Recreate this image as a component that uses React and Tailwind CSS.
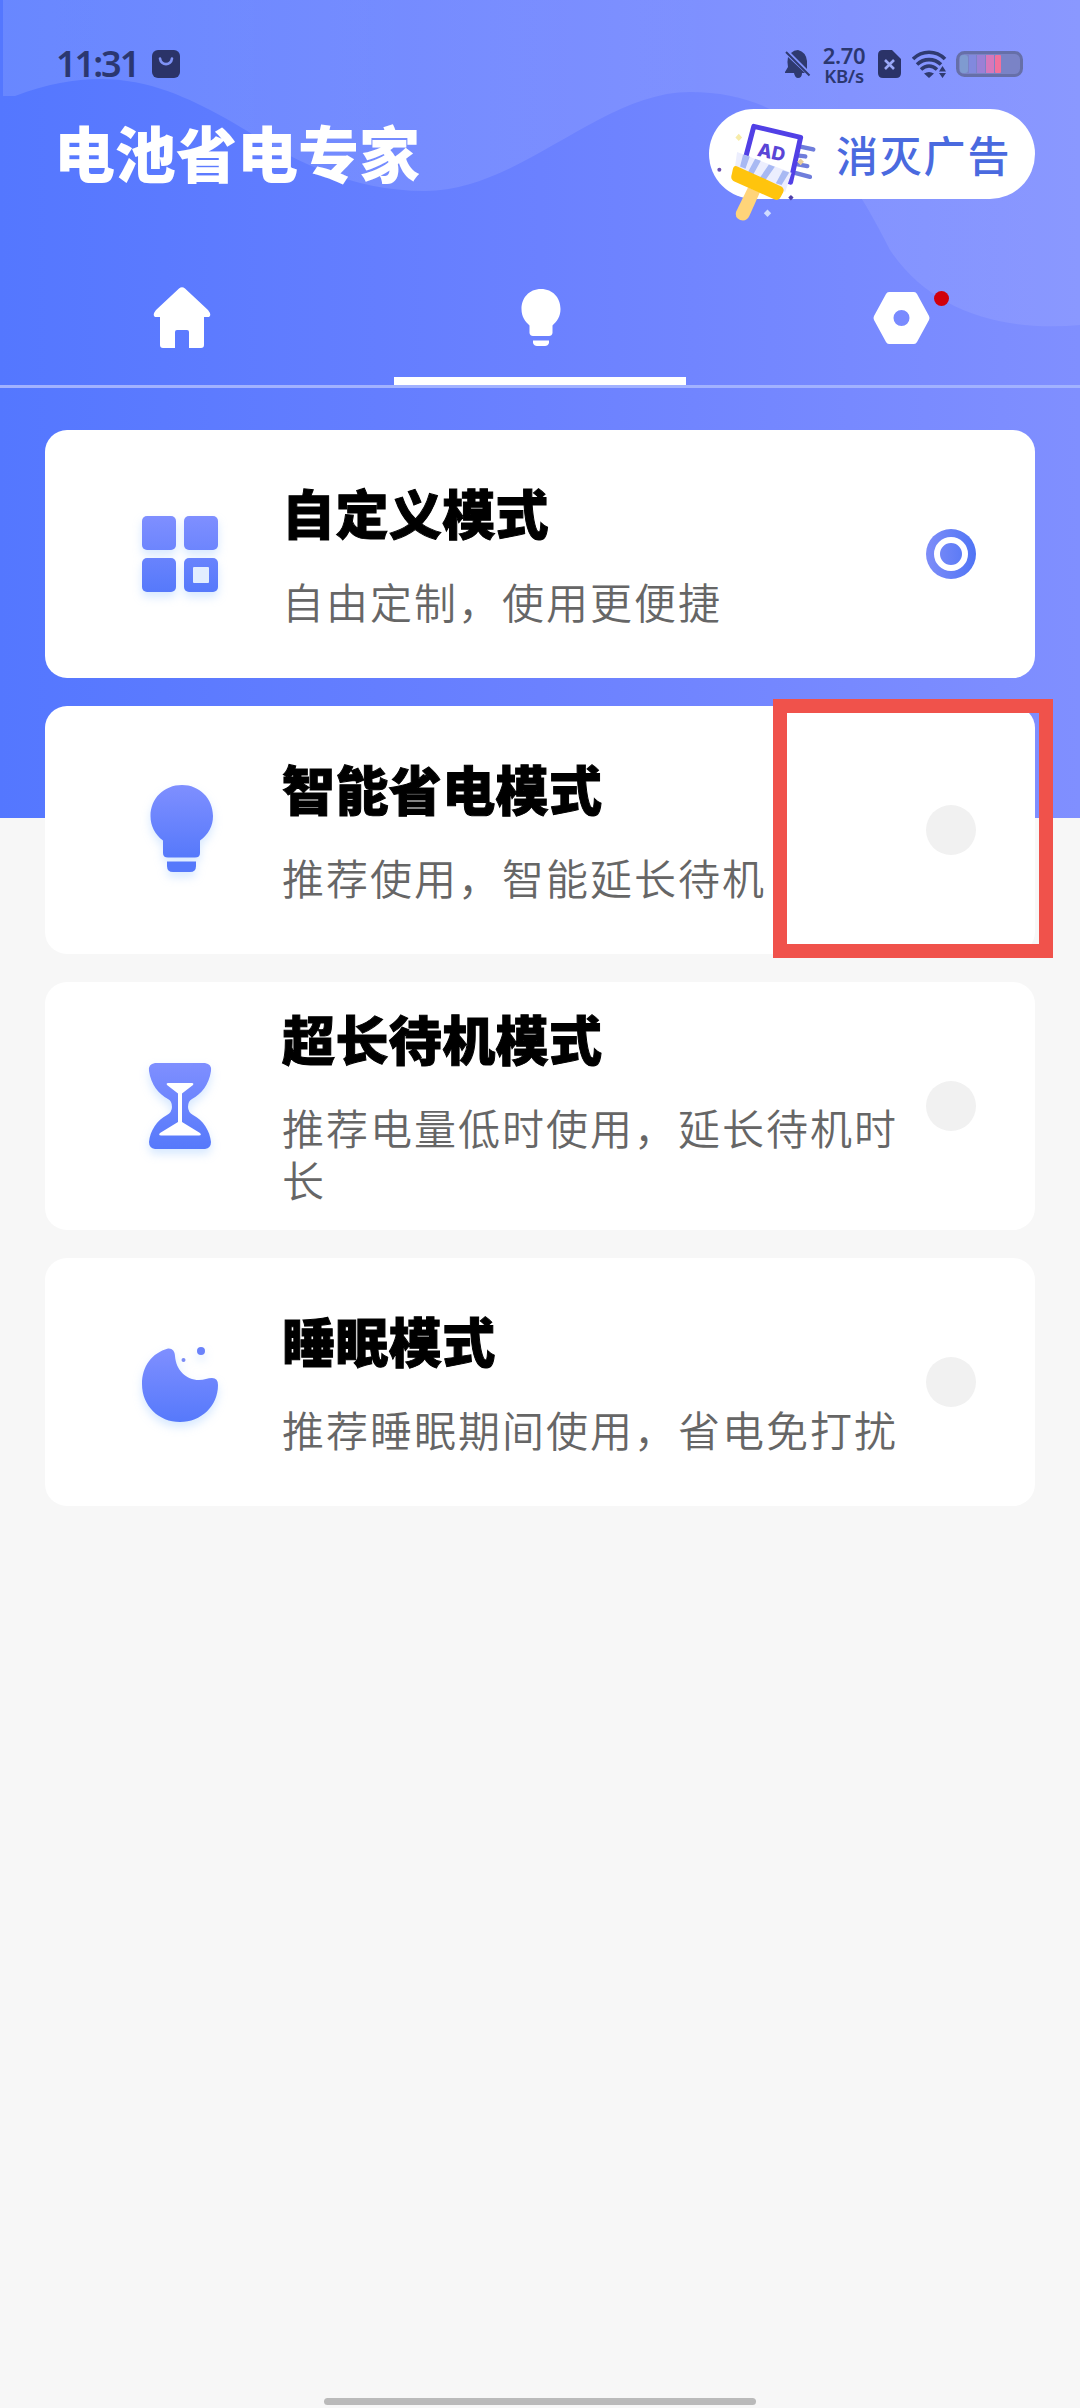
const MODES = [
  { id: 'custom', title: '自定义模式', desc: '自由定制，使用更便捷', icon: GridIcon },
  { id: 'smart', title: '智能省电模式', desc: '推荐使用，智能延长待机', icon: BulbIcon },
  { id: 'standby', title: '超长待机模式', desc: '推荐电量低时使用，延长待机时长', icon: HourglassIcon },
  { id: 'sleep', title: '睡眠模式', desc: '推荐睡眠期间使用，省电免打扰', icon: MoonIcon },
]

function IconGradient({ id }) {
  return (
    <defs>
      <linearGradient id={id} x1="0" y1="0" x2="0" y2="1">
        <stop offset="0" stopColor="#7f8fff" />
        <stop offset="1" stopColor="#5679fb" />
      </linearGradient>
    </defs>
  )
}

const ICON_CLASS = 'w-[100px] h-[110px] overflow-visible drop-shadow-[0_5px_5px_rgba(120,180,255,0.3)]'

// All mode icons share a 100x110 box centred on the card
function GridIcon() {
  return (
    <svg viewBox="0 0 100 110" className={ICON_CLASS}>
      <defs>
        <linearGradient id="grid" gradientUnits="userSpaceOnUse" x1="0" y1="17" x2="0" y2="93">
          <stop offset="0" stopColor="#7f8fff" />
          <stop offset="1" stopColor="#5679fb" />
        </linearGradient>
      </defs>
      <g fill="url(#grid)">
        <rect x="12" y="17" width="34" height="34" rx="5" />
        <rect x="54" y="17" width="34" height="34" rx="5" />
        <rect x="12" y="59" width="34" height="34" rx="5" />
        <rect x="54" y="59" width="34" height="34" rx="5" />
      </g>
      <rect x="63" y="68" width="16" height="16" rx="1" fill="#e2edff" />
    </svg>
  )
}

function BulbIcon() {
  return (
    <svg viewBox="0 0 100 110" className={ICON_CLASS}>
      <IconGradient id="bulb" />
      <path
        d="M52 10C34 10 20.500 23.500 20.500 41C20.500 51 25 59.500 33 65.500V78Q33 82.500 38 82.500H65Q70 82.500 70 78V65.500C78.500 59.500 83 51 83 41C83 23.500 69.500 10 52 10Z"
        fill="url(#bulb)"
      />
      <path d="M37 86.500H66V91Q66 97 60 97H43Q37 97 37 91Z" fill="#5679fb" />
    </svg>
  )
}

function HourglassIcon() {
  return (
    <svg viewBox="0 0 100 110" className={ICON_CLASS}>
      <IconGradient id="hourglass" />
      <path
        d="M25 12H75Q82 13 81 20C79 34 71 43 62 48Q58 50 58 56Q58 61 63 64C73 69 80 80 81 91Q81 97 75 98H25Q19 97 19 91C20 80 27 69 37 64Q42 61 42 56Q42 50 38 48C29 43 21 34 19 20Q18 13 25 12Z"
        fill="url(#hourglass)"
      />
      <path
        d="M38 32H62Q64 32 63 34L52 42.500V71L70 82Q72 84.500 69 84.500H31Q28 84.500 30 82L48 71V42.500L37 34Q36 32 38 32Z"
        fill="#fff"
      />
    </svg>
  )
}

function MoonIcon() {
  return (
    <svg viewBox="0 0 100 110" className={ICON_CLASS}>
      <IconGradient id="moon" />
      <path
        d="M38 21.500C42 21 45 24 45 29C46 43 56 53 69 53C74 53 78 51 82 51Q88 51 88 58C88 79 71 95 50 95C29 95 12 79 12 57C12 39 22 26 38 21.500Z"
        fill="url(#moon)"
      />
      <circle cx="71" cy="24" r="4" fill="#6a82fb" />
      <circle cx="53.500" cy="33" r="2" fill="#7b8cf5" />
    </svg>
  )
}

function HeaderBackground() {
  return (
    <svg viewBox="0 0 1080 818" className="absolute inset-x-0 top-0 h-[818px] w-full">
      <defs>
        <linearGradient id="base" x1="0" y1="0" x2="1" y2="0">
          <stop offset="0" stopColor="#5477ff" />
          <stop offset="0.5" stopColor="#6b81ff" />
          <stop offset="1" stopColor="#808fff" />
        </linearGradient>
        <linearGradient id="wave" x1="0" y1="0" x2="1" y2="0">
          <stop offset="0" stopColor="#fff" stopOpacity="0.12" />
          <stop offset="1" stopColor="#fff" stopOpacity="0.08" />
        </linearGradient>
      </defs>
      <rect width="1080" height="818" fill="url(#base)" />
      <path
        d="M3 0H1080V325C1000 332 930 310 890 250C850 170 800 92 690 92C600 92 520 191 425 191C330 191 265 140 225 118C170 88 110 60 15 96H3Z"
        fill="url(#wave)"
      />
    </svg>
  )
}

function StatusBar() {
  return (
    <div className="flex h-[109px] items-start pt-[48px] pl-[56px] pr-[57px] text-[#2b3770]">
      <span className="-mt-[6px] h-[44px] w-[96px] whitespace-nowrap font-['Noto_Sans'] text-[36px] leading-[44px] font-semibold tracking-[-2px]">11:31</span>
      <svg viewBox="0 0 28 28" className="mt-[2px] h-[28px] w-[28px]">
        <rect width="28" height="28" rx="6" fill="#2b3368" />
        <path d="M8 8.500C9 16 19 16 20 8.500" fill="none" stroke="#7f92f5" strokeWidth="2.600" strokeLinecap="round" />
      </svg>
      <div className="flex-1" />
      <svg viewBox="0 0 26 28" className="mt-[2px] h-[28px] w-[26px]">
        <path d="M13 0Q9 0 6 3L22 19V11Q21 2 13 0ZM3 7Q2 11 3 17L0 22V23H9Q10 28 13 28Q17 28 17 23H20Z" fill="#2f3a70" />
        <path d="M1 2L24.500 25.500" stroke="#2f3a70" strokeWidth="2" />
      </svg>
      <div className="ml-[10px] flex w-[46px] flex-col items-center font-['Noto_Sans'] font-semibold">
        <span className="-mt-[4px] h-[22px] text-[22px] leading-[22px] tracking-[-0.3px]">2.70</span>
        <span className="text-[18.5px] leading-[19px] tracking-[-0.3px]">KB/s</span>
      </div>
      <svg viewBox="0 0 23 28" className="mt-[2px] ml-[11px] h-[28px] w-[23px]">
        <path d="M5 0H14L23 9V23Q23 28 18 28H5Q0 28 0 23V5Q0 0 5 0Z" fill="#2b3368" />
        <path d="M7 10L16 19M16 10L7 19" stroke="#9aa8f8" strokeWidth="2.600" />
      </svg>
      <svg viewBox="0 0 36 28" className="mt-[2px] ml-[11px] h-[28px] w-[36px]">
        <g fill="none" stroke="#2f3a70" strokeWidth="3.600">
          <path d="M1 9C10 0 24 0 33 9" />
          <path d="M5 14.500C12 8 22 8 29 14.500" />
          <path d="M9 19.500C14 15 20 15 25 19.500" />
        </g>
        <path d="M12 23.500Q17 20.500 22 23.500L17 28Z" fill="#2f3a70" />
        <path d="M27 21.500L30.500 16L34 21.500ZM27 23L30.500 28L34 23Z" fill="#2f3a70" />
      </svg>
      <svg viewBox="0 0 67 26" className="mt-[3px] ml-[8px] h-[26px] w-[67px]">
        <rect x="1.500" y="1.500" width="64" height="23" rx="7" fill="#7a83c6" stroke="#666fa8" strokeWidth="3" />
        <rect x="4" y="4" width="8" height="18" rx="3" fill="#7f9bd0" />
        <rect x="13" y="4" width="7" height="18" fill="#8189de" />
        <rect x="21" y="4" width="8" height="18" fill="#9b80d6" />
        <rect x="30" y="4" width="8" height="18" fill="#d678bb" />
        <rect x="39" y="4" width="6" height="18" rx="1" fill="#f2719c" />
      </svg>
    </div>
  )
}

// Paint brush wiping away an ad banner
function BrushIcon() {
  return (
    <svg viewBox="100 350 320 320" className="absolute top-[8px] left-[4px] h-[107px] w-[107px]">
      <path d="M350 436L400 447M350 465L376 468M350 491L382 497M345 517L390 529" stroke="#6f7ddb" strokeWidth="13" strokeLinecap="round" />
      <path d="M222 378L362 411L332 545L190 500Z" fill="#fff" stroke="#5140e6" strokeWidth="15" strokeLinejoin="round" />
      <text x="230" y="466" transform="rotate(12 230 466)" fontFamily="Inter" fontWeight="800" fontSize="56" fill="#5a45d6">AD</text>
      <path d="M172 455L335 517L316 574L165 505Z" fill="#eceefe" />
      <path d="M190 462L210 468L197 505L181 498ZM226 475L243 481L220 523L204 516ZM267 492L285 499L256 540L240 532ZM309 509L328 516L305 553L288 548Z" fill="#a8b9f3" />
      <path d="M205 560L240 576L209 645Q200 664 181 658Q164 650 169 633Z" fill="#ffd479" />
      <path d="M171 497L301 556Q315 562 310 575L302 590Q296 602 283 596L164 543Q151 537 156 522L159 508Q161 494 171 497Z" fill="#ffc40d" />
      <circle cx="119" cy="508" r="6" fill="#6b50b0" />
      <path d="M333 583L341 591L333 600L325 591Z" fill="#4f3fa8" />
      <path d="M177 400L187 411L177 422L167 411Z" fill="#f7eca8" />
      <path d="M362 474L372 484L362 494L352 484Z" fill="#e8cd9c" />
      <path d="M263 627L274 638L263 649L252 638Z" fill="#cfdcff" />
    </svg>
  )
}

function Header() {
  return (
    <div className="flex h-[90px] items-center justify-between pr-[45px] pl-[54px]">
      <h1 className="-mt-[4px] text-[61px] leading-[90px] font-black text-white">电池省电专家</h1>
      <button className="relative h-[90px] w-[326px] rounded-full bg-white">
        <BrushIcon />
        <span className="-mt-[1px] block pl-[127px] text-left text-[42px] leading-[90px] font-medium tracking-[1.8px] text-[#4a6adf]">消灭广告</span>
      </button>
    </div>
  )
}

function Tabs() {
  return (
    <div className="grid h-[189px] grid-cols-3 border-b-[3px] border-[#a2b2ff]">
      <div className="flex justify-center pt-[87px]">
        <svg viewBox="0 0 58 62" className="ml-[3px] h-[62px] w-[58px]">
          <path d="M26 2.500Q29 0 32 2.500L55 24Q59 29 56 31H51V59Q51 62 48 62H36V46Q36 44 34 44H24Q22 44 22 46V62H10Q7 62 7 59V31H2Q-1 29 3 24Z" fill="#fff" />
        </svg>
      </div>
      <div className="flex flex-col items-center">
        <svg viewBox="0 0 40 58" className="mt-[90px] ml-[2px] h-[58px] w-[40px]">
          <path d="M20 0C8 0 0.500 9 0.500 20C0.500 28 4 32 8.500 36.500V44Q9 47 12 47H28Q31 47 31.500 44V36.500C36 32 39.500 28 39.500 20C39.500 9 32 0 20 0Z" fill="#fff" />
          <path d="M12 51.500H28V54Q27 57 24 57H16Q13 57 12 54Z" fill="#fff" />
        </svg>
        <div className="mt-[30px] h-[8px] w-[292px] bg-white" />
      </div>
      <div className="flex justify-center pt-[93px]">
        <div className="relative h-[52px] w-[57px]">
          <svg viewBox="0 0 57 52" className="ml-[1px] h-[52px] w-[57px]">
            <path
              d="M16 0H41Q43 0 44 2L56 24Q57 26 56 28L44 50Q43 52 41 52H16Q14 52 13 50L1 28Q0 26 1 24L13 2Q14 0 16 0ZM28.500 18A8 8 0 1 0 28.500 34A8 8 0 1 0 28.500 18Z"
              fill="#fff"
              fillRule="evenodd"
            />
          </svg>
          <span className="absolute -top-[1px] left-[62px] h-[15px] w-[15px] rounded-full bg-[#d1000c]" />
        </div>
      </div>
    </div>
  )
}

function Radio({ checked }) {
  if (!checked) return <span className="h-[50px] w-[50px] rounded-full bg-[#f1f1f1]" />
  return (
    <span className="flex h-[50px] w-[50px] items-center justify-center rounded-full bg-linear-to-r from-[#7e8df8] to-[#4f74f5]">
      <span className="h-[34px] w-[34px] rounded-full border-[6px] border-white" />
    </span>
  )
}

function ModeCard({ mode, checked, highlighted }) {
  const Icon = mode.icon
  return (
    <div className="relative flex h-[248px] items-center rounded-[22px] bg-white pr-[59px] pl-[85px]">
      <Icon />
      <div className="ml-[52px] w-[630px]">
        <h2 className="text-[53px] leading-[62px] font-black tracking-[0.4px] text-black [-webkit-text-stroke:1px_black]">{mode.title}</h2>
        <p className="mt-[32px] text-[42px] leading-[52px] font-[350] tracking-[2px] text-[#666]">{mode.desc}</p>
      </div>
      <div className="ml-auto flex">
        <Radio checked={checked} />
      </div>
      {highlighted && (
        <div className="absolute -top-[7px] -right-[18px] h-[259px] w-[280px] border-[14px] border-[#f0524b]" />
      )}
    </div>
  )
}

export default function App() {
  return (
    <div className="relative h-[2408px] w-[1080px] overflow-hidden bg-[#f7f7f7] font-['Noto_Sans_CJK_SC',sans-serif]">
      <HeaderBackground />
      <div className="relative flex h-full flex-col">
        <StatusBar />
        <Header />
        <Tabs />
        <main className="flex flex-1 flex-col gap-[28px] px-[45px] pt-[42px]">
          {MODES.map(m => (
            <ModeCard key={m.id} mode={m} checked={m.id === 'custom'} highlighted={m.id === 'smart'} />
          ))}
        </main>
        <div className="mx-auto mb-[3px] h-[7px] w-[432px] rounded-full bg-[#bababa]" />
      </div>
    </div>
  )
}
